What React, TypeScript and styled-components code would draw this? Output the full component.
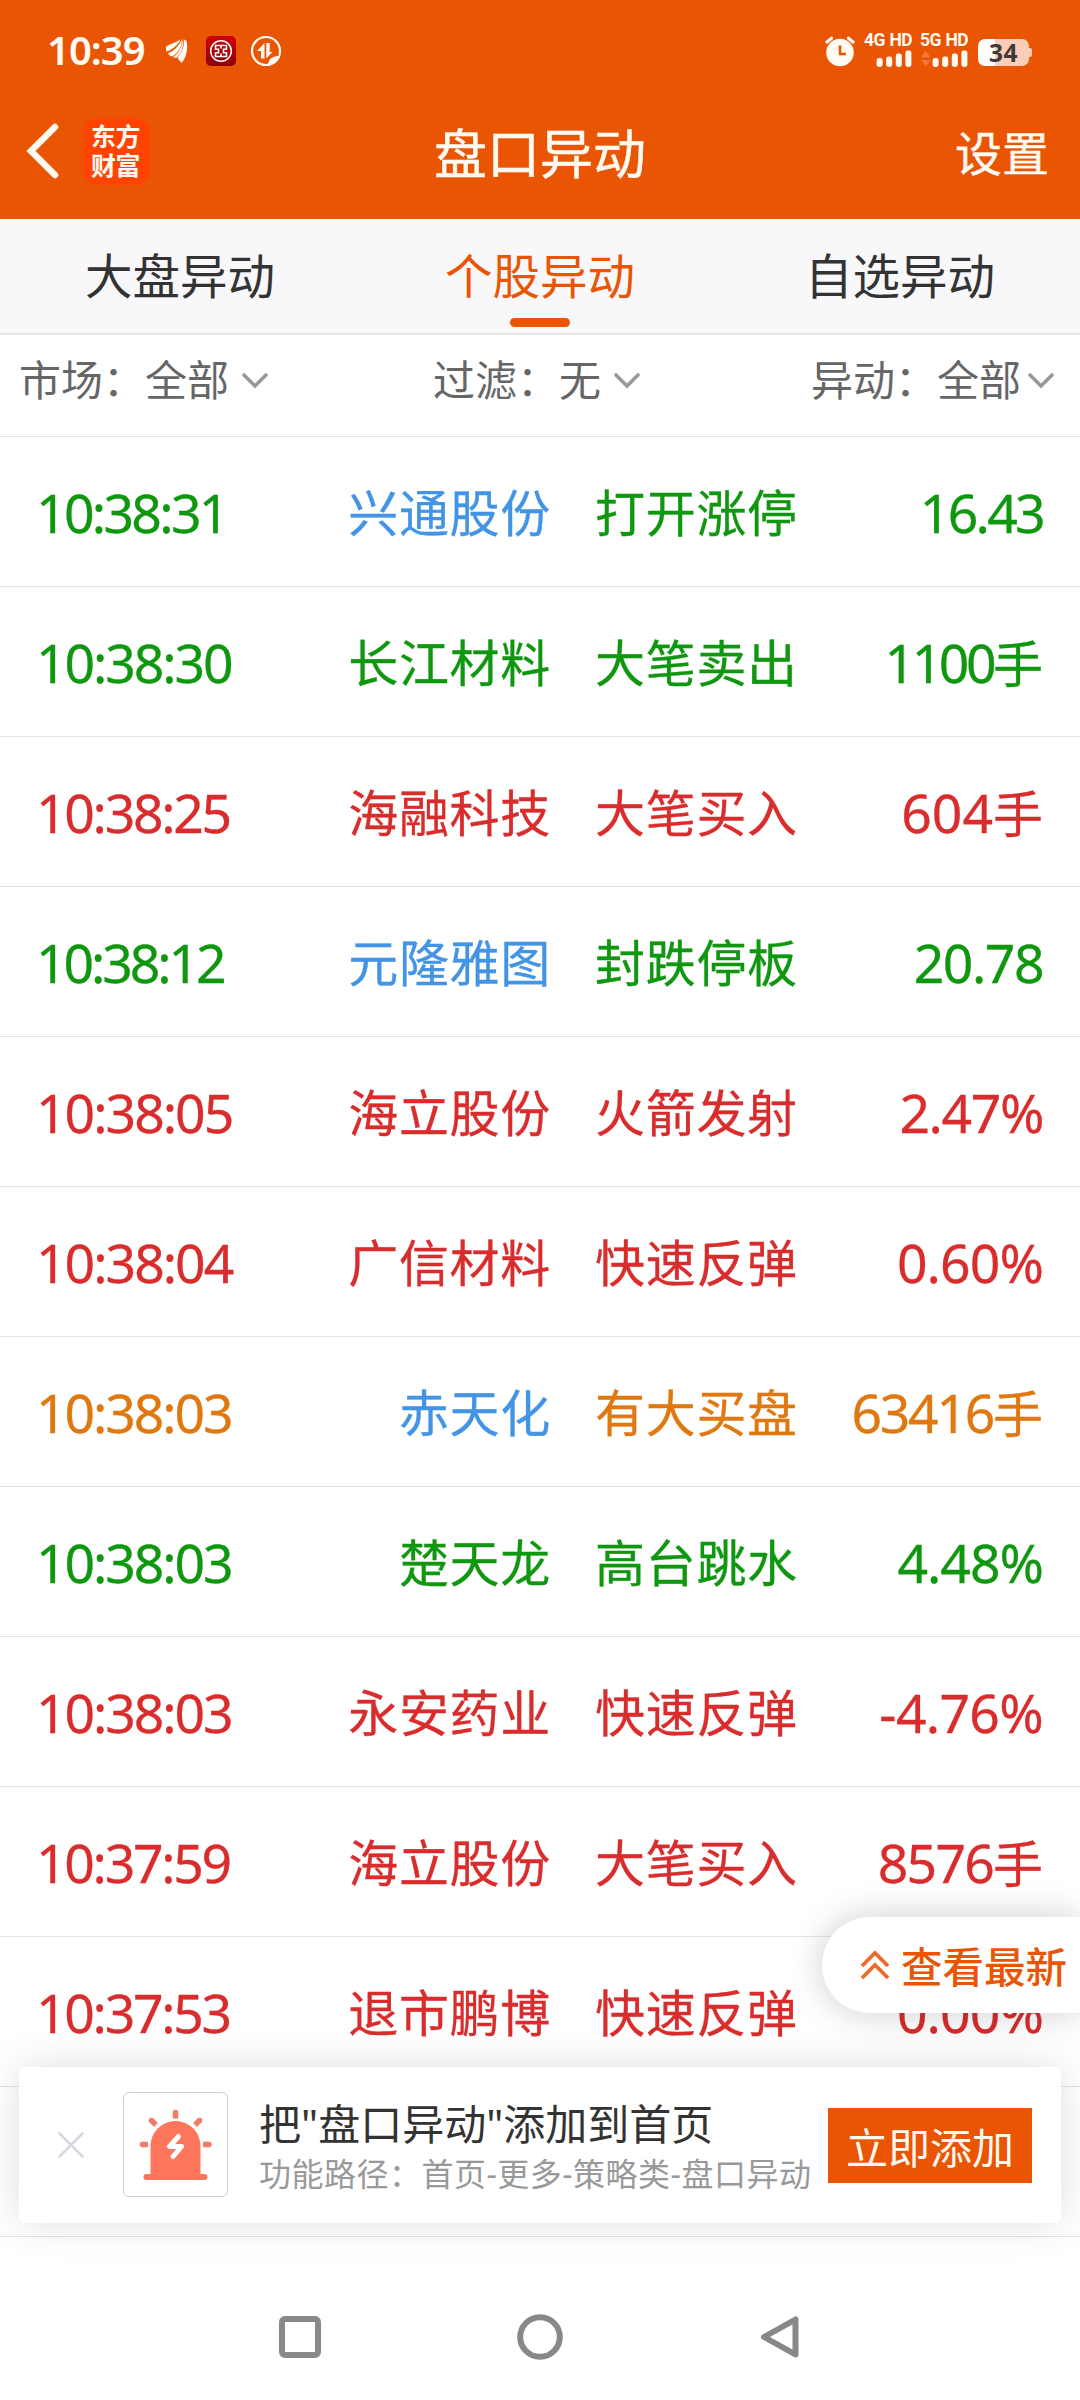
import React from 'react';
import styled, { createGlobalStyle } from 'styled-components';

const GlobalStyle = createGlobalStyle`
  * { box-sizing: border-box; }
  body { margin: 0; background: #fff; font-family: 'Noto Sans', 'Noto Sans CJK SC', sans-serif; }
`;

const BRAND = '#ea5504';
const GREEN = '#0f970f';
const RED = '#d92c2c';
const BLUE = '#4394e4';
const AMBER = '#e07810';

const Screen = styled.div`
  position: relative;
  width: 1080px;
  height: 2400px;
  overflow: hidden;
  display: flex;
  flex-direction: column;
  background: #fff;
`;
const Header = styled.header`
  height: 219px;
  background: ${BRAND};
  color: #fffaf2;
`;
const StatusBar = styled.div`
  height: 84px;
  padding: 30px 51px 0 47px;
  display: flex;
  align-items: flex-start;
`;
const Clock = styled.span`
  width: 119px;
  font: 600 40px/40px 'Noto Sans', sans-serif;
  letter-spacing: -1px;
  white-space: nowrap;
`;
const StatusIcons = styled.svg`
  display: block;
  margin-top: -5px;
`;
const Spacer = styled.div`
  flex: 1;
`;
const Alarm = styled.svg`
  margin-right: 9px;
`;
const Network = styled.div<{ $gap: number }>`
  width: 48px;
  margin-right: ${(p) => p.$gap}px;
  margin-top: 1px;
`;
const NetworkLabel = styled.div`
  font: 700 17.5px/19px Roboto, sans-serif;
  letter-spacing: -0.6px;
  word-spacing: 1px;
  white-space: nowrap;
`;
const Bars = styled.svg`
  display: block;
`;
const Battery = styled.div`
  position: relative;
  width: 51px;
  height: 27px;
  margin: 9px 0 0 0;
  border-radius: 7px;
  background: linear-gradient(90deg, #fff 34%, #f9cdb6 34%);
  color: #3d3a3a;
  font: 700 24.5px/27px 'Noto Sans', sans-serif;
  text-align: center;
  letter-spacing: 0.5px;
  &::after {
    content: '';
    position: absolute;
    left: 51px;
    top: 9px;
    width: 3px;
    height: 9px;
    border-radius: 0 2px 2px 0;
    background: #f9cdb6;
  }
`;
const TitleBar = styled.div`
  height: 134px;
  display: grid;
  grid-template-columns: 300px 1fr 300px;
  align-items: center;
`;
const Leading = styled.div`
  display: flex;
  align-items: center;
  padding-left: 26px;
`;
const Logo = styled.div`
  width: 67px;
  height: 67px;
  margin-left: 23px;
  padding: 3px 0 0 8px;
  border-radius: 15px;
  background: #ff4402;
  font: 700 25px/29px 'Noto Sans CJK SC', sans-serif;
  letter-spacing: -0.5px;
`;
const Title = styled.h1`
  margin: 0;
  text-align: center;
  font: 400 53px/60px 'Noto Sans CJK SC', sans-serif;
  -webkit-text-stroke: 0.5px;
`;
const Settings = styled.button`
  all: unset;
  justify-self: end;
  margin-right: 31px;
  font: 400 47px/60px 'Noto Sans CJK SC', sans-serif;
  -webkit-text-stroke: 0.4px;
`;
const Tabs = styled.nav`
  height: 116px;
  display: grid;
  grid-template-columns: repeat(3, 1fr);
  background: #f8f8fa;
  border-bottom: 2px solid #e4e4e6;
`;
const Tab = styled.button<{ $active?: boolean }>`
  all: unset;
  display: flex;
  flex-direction: column;
  align-items: center;
  padding-top: 24px;
  font: 400 47.5px/62px 'Noto Sans CJK SC', sans-serif;
  color: ${(p) => (p.$active ? BRAND : '#333')};
  &::after {
    content: '';
    width: 60px;
    height: 9px;
    margin-top: 13px;
    border-radius: 5px;
    background: ${(p) => (p.$active ? BRAND : 'transparent')};
  }
`;
const Filters = styled.div`
  height: 102px;
  display: flex;
  align-items: flex-start;
  padding-top: 13px;
  border-bottom: 1px solid #e3e3e3;
`;
const Filter = styled.button<{ $before: number; $gap: number }>`
  all: unset;
  display: flex;
  align-items: center;
  gap: ${(p) => p.$gap}px;
  margin-left: ${(p) => p.$before}px;
  font: 400 42px/60px 'Noto Sans CJK SC', sans-serif;
  color: #666;
  white-space: nowrap;
`;
const ChevronIcon = styled.svg`
  margin-top: 5px;
`;
const List = styled.ul`
  margin: 0;
  padding: 0;
  list-style: none;
`;
const Row = styled.li<{ $color: string }>`
  height: 150px;
  display: grid;
  grid-template-columns: 300px 215px 246px 1fr;
  align-items: center;
  padding: 3px 37px 0 36px;
  border-bottom: 1px solid #e3e3e3;
  color: ${(p) => p.$color};
  font: 400 50px/70px 'Noto Sans', 'Noto Sans CJK SC', sans-serif;
  -webkit-text-stroke: 0.3px;
  white-space: nowrap;
`;
const Digits = styled.span<{ $ls: number }>`
  font: 400 53.5px/70px 'Noto Sans', sans-serif;
  letter-spacing: ${(p) => p.$ls}px;
`;
const Stock = styled.span<{ $linked?: boolean }>`
  letter-spacing: 0.7px;
  text-align: right;
  ${(p) => p.$linked && `color: ${BLUE};`}
`;
const EventName = styled.span`
  padding-left: 44px;
  letter-spacing: 0.7px;
`;
const Amount = styled.span`
  text-align: right;
`;
const Latest = styled.button`
  all: unset;
  box-sizing: border-box;
  position: absolute;
  right: 0;
  top: 1917px;
  width: 258px;
  height: 96px;
  display: flex;
  align-items: center;
  gap: 10px;
  padding-left: 37px;
  border-radius: 48px 0 0 48px;
  background: #fff;
  box-shadow: 0 0 36px rgba(0, 0, 0, 0.2);
  color: ${BRAND};
  font: 500 41.5px/60px 'Noto Sans CJK SC', sans-serif;
  white-space: nowrap;
`;
const Banner = styled.aside`
  position: absolute;
  left: 19px;
  top: 2067px;
  width: 1042px;
  height: 156px;
  display: flex;
  align-items: center;
  border-radius: 5px;
  background: #fff;
  box-shadow: 0 0 42px rgba(0, 0, 0, 0.13);
`;
const Close = styled.svg`
  margin-left: 38px;
`;
const IconBox = styled.div`
  width: 105px;
  height: 105px;
  margin-left: 38px;
  margin-top: -1px;
  border: 1px solid #ccc;
  border-radius: 6px;
`;
const BannerText = styled.div`
  flex: 1;
  padding: 3px 0 0 31px;
  white-space: nowrap;
`;
const BannerTitle = styled.div`
  font: 400 42px/54px 'Noto Sans', 'Noto Sans CJK SC', sans-serif;
  color: #333;
`;
const BannerPath = styled.div`
  font: 400 32px/46px 'Noto Sans', 'Noto Sans CJK SC', sans-serif;
  letter-spacing: 0.5px;
  color: #999;
`;
const AddButton = styled.button`
  all: unset;
  width: 204px;
  height: 75px;
  margin-right: 29px;
  background: ${BRAND};
  color: #fffaf0;
  font: 400 42px/75px 'Noto Sans CJK SC', sans-serif;
  text-align: center;
`;
const SystemNav = styled.footer`
  height: 126px;
  margin-top: auto;
  display: flex;
  justify-content: center;
  gap: 192px;
  padding-top: 39px;
`;

const Chevron = () => (
  <ChevronIcon width="26" height="16" viewBox="0 0 26 16">
    <path d="M2 2 L13 13 L24 2" fill="none" stroke="#999" strokeWidth="3.6" strokeLinecap="round" />
  </ChevronIcon>
);

const SignalBars = ({ data }: { data?: boolean }) => (
  <Bars width="48" height="18" viewBox="0 0 48 18">
    {data && <path d="M1 7.5 L5.7 1 L10.5 7.5Z M1 10 H10.5 L5.7 16.5Z" fill="#f4783c" />}
    {[9, 10.5, 13.5, 16.5].map((h, i) => (
      <rect key={h} x={12.6 + i * 9.6} y={17 - h} width="6" height={h} rx="2.4" fill="#fffaf2" />
    ))}
  </Bars>
);

type Item = { time: string; ls: number; name: string; linked?: boolean; event: string; num: string; nls: number; hand?: boolean; color: string };
const items: Item[] = [
  { time: '10:38:31', ls: -2.7, name: '兴通股份', linked: true, event: '打开涨停', num: '16.43', nls: -2.7, color: GREEN },
  { time: '10:38:30', ls: -2.1, name: '长江材料', event: '大笔卖出', num: '1100', nls: -3.5, hand: true, color: GREEN },
  { time: '10:38:25', ls: -2.3, name: '海融科技', event: '大笔买入', num: '604', nls: 0, hand: true, color: RED },
  { time: '10:38:12', ls: -3.1, name: '元隆雅图', linked: true, event: '封跌停板', num: '20.78', nls: -1.5, color: GREEN },
  { time: '10:38:05', ls: -2, name: '海立股份', event: '火箭发射', num: '2.47%', nls: -1.4, color: RED },
  { time: '10:38:04', ls: -2, name: '广信材料', event: '快速反弹', num: '0.60%', nls: -0.9, color: RED },
  { time: '10:38:03', ls: -2.1, name: '赤天化', linked: true, event: '有大买盘', num: '63416', nls: -2.3, hand: true, color: AMBER },
  { time: '10:38:03', ls: -2.1, name: '楚天龙', event: '高台跳水', num: '4.48%', nls: -1, color: GREEN },
  { time: '10:38:03', ls: -2.1, name: '永安药业', event: '快速反弹', num: '-4.76%', nls: -0.7, color: RED },
  { time: '10:37:59', ls: -2.3, name: '海立股份', event: '大笔买入', num: '8576', nls: -1.8, hand: true, color: RED },
  { time: '10:37:53', ls: -2.3, name: '退市鹏博', event: '快速反弹', num: '0.00%', nls: -0.9, color: RED },
];

export default function App() {
  return (
    <Screen>
      <GlobalStyle />
      <Header>
        <StatusBar>
          <Clock>10:39</Clock>
          <StatusIcons width="120" height="50" viewBox="166 25 120 50">
            <g fill="#fffaf2">
              <path d="M165.8 46.500 C171 43.500 176 43 180.500 39.300 C178 45.500 172 50 166.800 51.500 C165.500 50 165.500 48 165.800 46.500Z" />
              <path d="M181.800 39.200 C182.500 46 178 53.500 172 56.500 C170 56 168.500 54.800 168 53.300 C174 51 179 46 181.800 39.200Z" />
              <path d="M183.600 39.200 L186.400 40.800 C188.500 48 186.500 57 181.800 62.800 C179.500 61.200 178.300 59.500 177.600 57.300 C182.500 52 184.500 46 183.600 39.200Z" />
              <path d="M182.700 40 C184 47 181 54 176.300 58 L173 57.200 C178.500 53.500 182 47 182.700 40Z" />
            </g>
            <defs>
              <linearGradient id="bank" x2="0" y2="1">
                <stop stopColor="#cf0008" />
                <stop offset="1" stopColor="#8e0008" />
              </linearGradient>
            </defs>
            <rect x="206" y="36" width="30" height="30" rx="5" fill="url(#bank)" />
            <circle cx="221" cy="51" r="10.300" fill="none" stroke="#fff" strokeWidth="1.500" />
            <path d="M215.500 45.500 H226.500 V49.300 H223.500 V52.700 H226.500 V56.500 H215.500 V52.700 H218.500 V49.300 H215.500Z M221 45.500 V48.500 M221 53.500 V56.500" fill="none" stroke="#fff" strokeWidth="1.600" />
            <circle cx="266" cy="51" r="14" fill="none" stroke="#fffaf2" strokeWidth="2.200" />
            <path d="M257 51 L264.500 43 V58.500 H261 V51Z M266.300 43 H269.700 V52 H272.500 L266.300 58.500Z" fill="#fffaf2" />
            <path d="M268 64 C269 58 273 56 280 56 C278.500 61.500 274 65 268 64Z" fill="#fffaf2" />
            <path d="M267.500 62.500 C269 57.500 272.500 55 279 54.800" fill="none" stroke={BRAND} strokeWidth="1" />
          </StatusIcons>
          <Spacer />
          <Alarm width="30" height="40" viewBox="0 0 30 40">
            <circle cx="15" cy="22.500" r="13.800" fill="#fffaf2" />
            <path d="M2 12 L6.500 8.200 M28 12 L23.500 8.200" stroke="#fffaf2" strokeWidth="3.200" strokeLinecap="round" />
            <path d="M15 15.500 V24 H21" fill="none" stroke={BRAND} strokeWidth="2.600" />
          </Alarm>
          <Network $gap={8}>
            <NetworkLabel>4G HD</NetworkLabel>
            <SignalBars />
          </Network>
          <Network $gap={10}>
            <NetworkLabel>5G HD</NetworkLabel>
            <SignalBars data />
          </Network>
          <Battery>34</Battery>
        </StatusBar>
        <TitleBar>
          <Leading>
            <svg width="34" height="56" viewBox="0 0 34 56">
              <path d="M29 4 L5 28 L29 52" fill="none" stroke="#fffaf2" strokeWidth="6.500" strokeLinecap="round" />
            </svg>
            <Logo>东方<br />财富</Logo>
          </Leading>
          <Title>盘口异动</Title>
          <Settings>设置</Settings>
        </TitleBar>
      </Header>
      <Tabs>
        <Tab>大盘异动</Tab>
        <Tab $active>个股异动</Tab>
        <Tab>自选异动</Tab>
      </Tabs>
      <Filters>
        <Filter $before={19} $gap={13}>市场：全部<Chevron /></Filter>
        <Filter $before={165} $gap={13}>过滤：无<Chevron /></Filter>
        <Filter $before={171} $gap={7}>异动：全部<Chevron /></Filter>
      </Filters>
      <List>
        {items.map((it, i) => (
          <Row key={i} $color={it.color}>
            <Digits $ls={it.ls}>{it.time}</Digits>
            <Stock $linked={it.linked}>{it.name}</Stock>
            <EventName>{it.event}</EventName>
            <Amount>
              <Digits $ls={it.nls}>{it.num}</Digits>
              {it.hand && '手'}
            </Amount>
          </Row>
        ))}
        <Row $color={RED} />
      </List>
      <SystemNav>
        <svg width="48" height="48" viewBox="-24 -24 48 48">
          <rect x="-18" y="-18" width="36" height="36" rx="3" fill="none" stroke="#888" strokeWidth="6" />
        </svg>
        <svg width="48" height="48" viewBox="-24 -24 48 48">
          <circle r="19.800" fill="none" stroke="#888" strokeWidth="6" />
        </svg>
        <svg width="48" height="48" viewBox="-24 -24 48 48">
          <path d="M15.500 -17.500 V17.500 L-16 0Z" fill="none" stroke="#888" strokeWidth="6" strokeLinejoin="round" />
        </svg>
      </SystemNav>
      <Latest>
        <svg width="32" height="34" viewBox="0 0 32 34">
          <path d="M3 18 L16 5 L29 18 M3 30 L16 17 L29 30" fill="none" stroke="#ee6a2a" strokeWidth="3.800" />
        </svg>
        查看最新
      </Latest>
      <Banner>
        <Close width="28" height="28" viewBox="0 0 28 28">
          <path d="M2.500 2.500 L25.500 25.500 M25.500 2.500 L2.500 25.500" stroke="#d5d8dc" strokeWidth="2.500" strokeLinecap="round" />
        </Close>
        <IconBox>
          <svg width="103" height="103" viewBox="124 2093 103 103">
            <path d="M150.500 2176 V2146 A25 25 0 0 1 200.500 2146 V2176Z" fill="#fd765c" />
            <rect x="143.500" y="2174" width="64" height="6" rx="3" fill="#fd765c" />
            <path d="M175.500 2112.500 V2118.500 M142.500 2144.500 H148 M203 2144.500 H209 M151.500 2120.500 L156 2125 M199.500 2120.500 L195 2125" stroke="#f27d67" strokeWidth="5.500" />
            <g fill="#f27d67">
              <circle cx="175.500" cy="2112.500" r="2.750" />
              <circle cx="142.500" cy="2144.500" r="2.750" />
              <circle cx="209" cy="2144.500" r="2.750" />
              <circle cx="151.500" cy="2120.500" r="2.750" />
              <circle cx="199.500" cy="2120.500" r="2.750" />
            </g>
            <path d="M178.500 2136.500 L169.500 2146.500 H181.500 L173 2156.500" fill="none" stroke="#fff" strokeWidth="5" strokeLinecap="round" strokeLinejoin="round" />
          </svg>
        </IconBox>
        <BannerText>
          <BannerTitle>把"盘口异动"添加到首页</BannerTitle>
          <BannerPath>功能路径：首页-更多-策略类-盘口异动</BannerPath>
        </BannerText>
        <AddButton>立即添加</AddButton>
      </Banner>
    </Screen>
  );
}
